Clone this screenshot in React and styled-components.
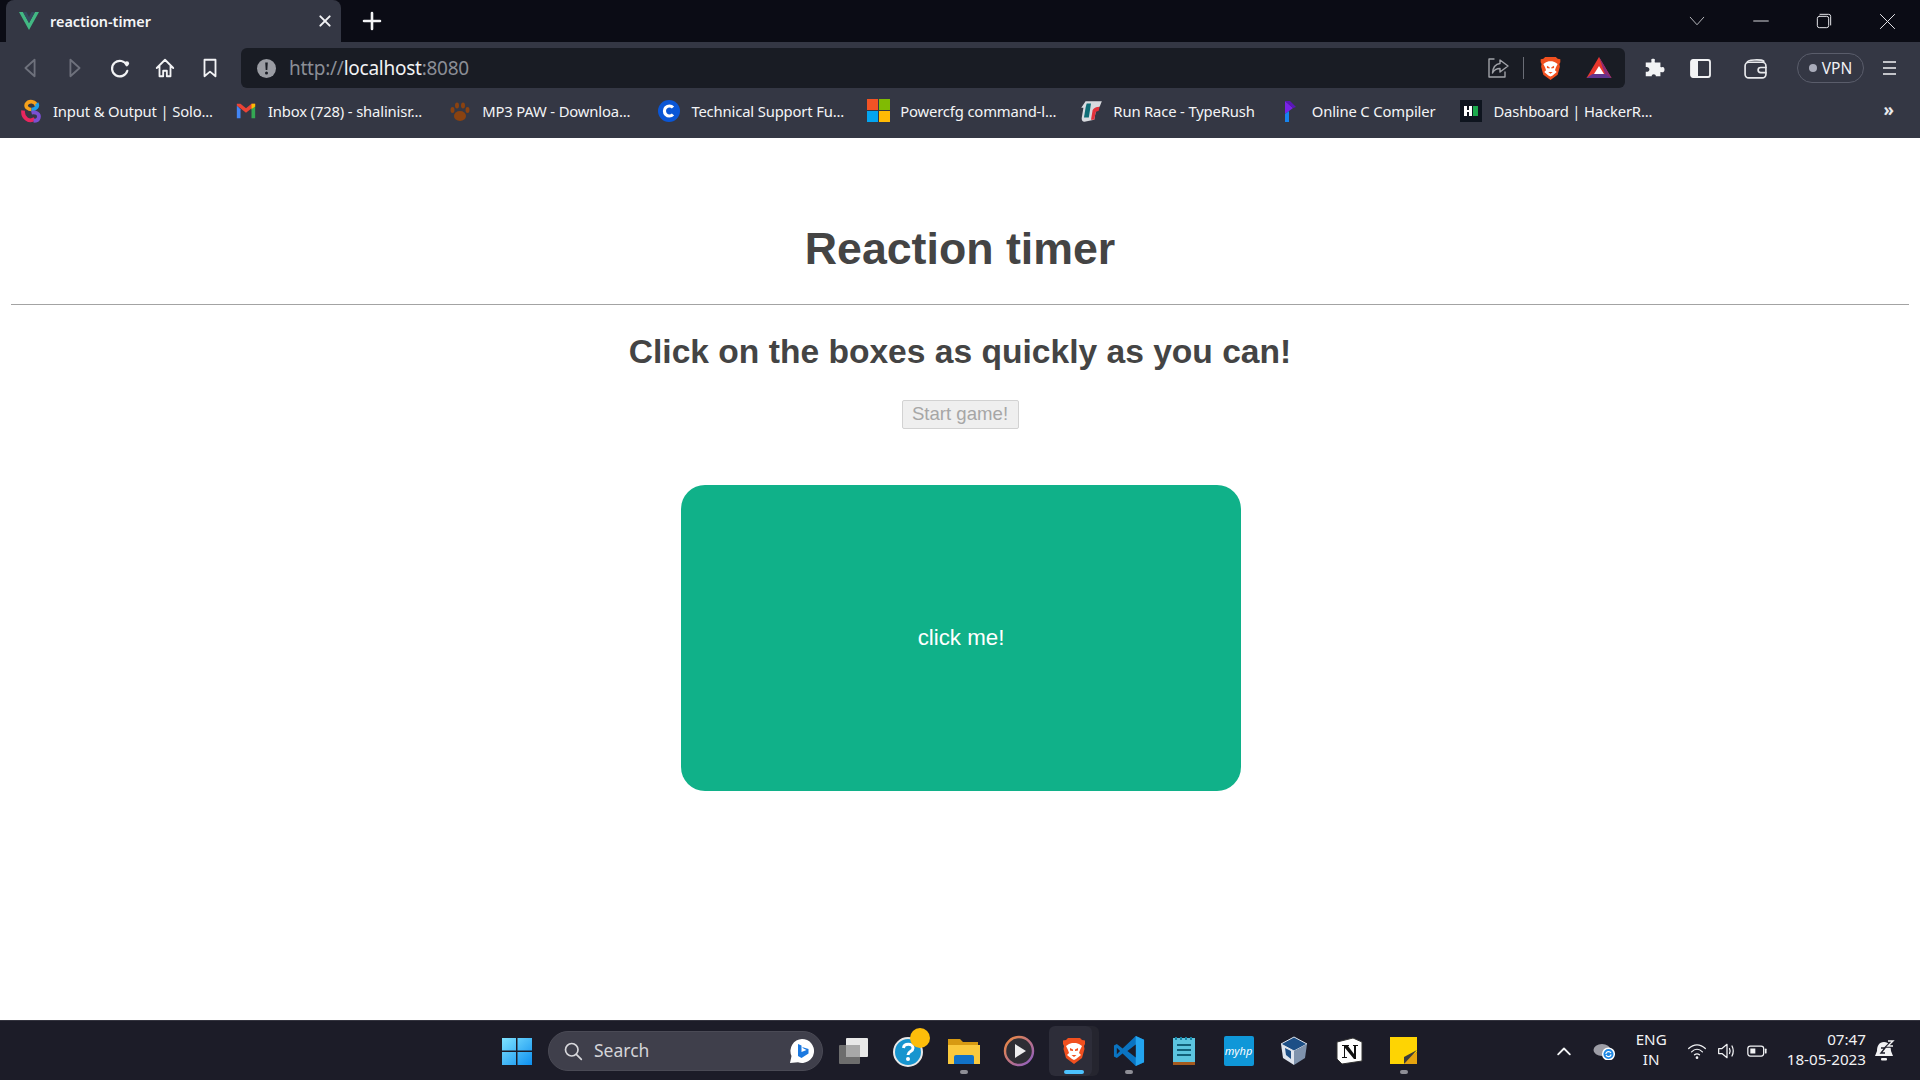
import React from 'react';
import styled, { createGlobalStyle } from 'styled-components';

const Global = createGlobalStyle`
  html, body { margin: 0; padding: 0; height: 100%; overflow: hidden; }
  body { font-family: "Liberation Sans", Arial, sans-serif; background: #fff; }
`;

const Screen = styled.div`
  width: 1920px;
  height: 1080px;
  display: flex;
  flex-direction: column;
`;

/* browser chrome */
const TabStrip = styled.div`
  height: 42px;
  flex: none;
  background: #0b0c15;
  display: flex;
  align-items: flex-end;
  padding-left: 6px;
`;
const Tab = styled.div`
  width: 335px;
  height: 42px;
  background: #343744;
  border-radius: 8px 8px 0 0;
  display: flex;
  align-items: center;
  padding: 0 8px 0 13px;
  box-sizing: border-box;
  color: #f4f5f7;
  font: 600 14.4px "Noto Sans", sans-serif;
`;
const TabTitle = styled.span`
  margin-left: 11px;
  flex: 1;
`;
const NewTab = styled.div`
  margin-left: 19px;
  margin-bottom: 9px;
  width: 24px;
  height: 24px;
  display: flex;
`;
const WindowControls = styled.div`
  margin-left: auto;
  height: 42px;
  display: flex;
  align-items: center;
  gap: 47px;
  padding-right: 24px;
`;
const Toolbar = styled.div`
  height: 46px;
  flex: none;
  background: #343744;
  display: flex;
  align-items: center;
  box-sizing: border-box;
  padding: 6px 0 0 19px;
`;
const NavIcons = styled.div`
  display: flex;
  align-items: center;
  gap: 23px;
  width: 222px;
`;
const AddressBar = styled.div`
  width: 1384px;
  height: 40px;
  background: #191c24;
  border-radius: 6px;
  display: flex;
  align-items: center;
  padding: 0 13px 0 16px;
  box-sizing: border-box;
`;
const Url = styled.div`
  margin-left: 13px;
  font: 19px "Noto Sans", sans-serif;
  letter-spacing: -0.25px;
  color: #8b8e96;
  flex: 1;
  b { font-weight: 400; color: #f1f2f4; }
`;
const AddressDivider = styled.div`
  width: 1px;
  height: 22px;
  background: #6a6d76;
  margin: 0 14px 0 13px;
`;
const ToolbarRight = styled.div`
  display: flex;
  align-items: center;
  margin-left: 18px;
  gap: 25px;
`;
const WalletIcon = styled.div`
  display: flex;
  margin-left: 7px;
`;
const VpnPill = styled.div`
  width: 67px;
  height: 30px;
  border: 1px solid #5a5d6b;
  border-radius: 16px;
  box-sizing: border-box;
  display: flex;
  align-items: center;
  justify-content: center;
  gap: 5px;
  color: #f0f1f4;
  font: 15.5px "Noto Sans", sans-serif;
  margin-left: 4px;
  &::before {
    content: "";
    width: 8px;
    height: 8px;
    border-radius: 50%;
    background: #a9acba;
  }
`;
const MenuIcon = styled.div`
  display: flex;
  margin-left: -7px;
`;
const Bookmarks = styled.div`
  height: 50px;
  flex: none;
  background: #343744;
  display: flex;
  align-items: center;
  box-sizing: border-box;
  padding: 0 24px 5px 18px;
`;
const Bookmark = styled.div`
  display: flex;
  align-items: center;
  gap: 9px;
  margin-right: ${p => p.$gap}px;
  color: #f3f4f6;
  font: 14.8px "Noto Sans", sans-serif;
  letter-spacing: -0.15px;
  white-space: nowrap;
`;
const Favicon = styled.div`
  width: 26px;
  height: 26px;
  display: flex;
  align-items: center;
  justify-content: center;
  flex: none;
`;
const MoreMarks = styled.div`
  margin-left: auto;
  color: #e8e9ec;
  font: 700 17px "Noto Sans", sans-serif;
  position: relative;
  top: -1px;
  left: -2px;
`;

/* page */
const Page = styled.main`
  flex: 1;
  background: #fff;
  padding: 86px 11px 0;
  color: #444;
  text-align: center;
`;
const Title = styled.h1`
  margin: 0;
  font-size: 44.7px;
  line-height: 50px;
  font-weight: 700;
`;
const Rule = styled.hr`
  margin: 30px 0 0;
  border: none;
  height: 1px;
  background: #a3a3a3;
`;
const Subtitle = styled.h2`
  margin: 27px 0 0;
  font-size: 33.6px;
  line-height: 40px;
  font-weight: 700;
`;
const StartButton = styled.button`
  display: block;
  margin: 28px auto 0;
  width: 117px;
  height: 29px;
  padding: 0 0 1px;
  background: #efefef;
  border: 1px solid #d2d2d2;
  border-radius: 2px;
  color: #a6a6a6;
  font: 18.6px "Liberation Sans", Arial, sans-serif;
`;
const Block = styled.div`
  width: 560px;
  height: 306px;
  margin: 56px 0 0 670px;
  background: #10b189;
  border-radius: 24px;
  display: flex;
  align-items: center;
  justify-content: center;
  color: #fff;
  font-size: 22.3px;
`;

/* windows taskbar */
const Taskbar = styled.footer`
  height: 60px;
  flex: none;
  background: #1c1c28;
  border-top: 1px solid #33333e;
  box-sizing: border-box;
  display: flex;
  align-items: center;
  padding-left: 502px;
`;
const SearchBox = styled.div`
  width: 275px;
  height: 40px;
  margin-left: 16px;
  background: #3f3f4b;
  border: 1px solid #4a4a55;
  border-radius: 20px;
  box-sizing: border-box;
  display: flex;
  align-items: center;
  padding: 0 7px 0 14px;
  color: #d4d4d8;
  font: 17.5px "Noto Sans", sans-serif;
  span { margin: 0 0 2px 11px; flex: 1; }
`;
const AppRow = styled.div`
  display: flex;
  align-items: center;
  margin-left: 3px;
`;
const AppSlot = styled.div`
  position: relative;
  isolation: isolate;
  width: 55px;
  height: 50px;
  display: flex;
  align-items: center;
  justify-content: center;
  flex: none;
  ${p => p.$active && `
    &::before {
      content: "";
      position: absolute;
      z-index: -1;
      left: 3px;
      top: 0;
      width: 43px;
      height: 50px;
      border-radius: 6px;
      background: #2d2d39;
      box-shadow: 7px 0 0 #25252f;
    }
  `}
  ${p => p.$dot && `
    &::after {
      content: "";
      position: absolute;
      bottom: 2px;
      left: 50%;
      transform: translateX(-50%);
      width: ${p.$active ? 20 : 8}px;
      height: 3.5px;
      border-radius: 2px;
      background: ${p.$active ? '#4cc2ff' : '#8e8e96'};
    }
  `}
`;
const Tray = styled.div`
  margin-left: auto;
  display: flex;
  align-items: center;
  color: #f2f2f4;
  font: 15.2px/20px "Noto Sans", sans-serif;
`;
const Lang = styled.div`
  text-align: center;
  margin: 0 20px 3px 21px;
`;
const Clock = styled.div`
  text-align: right;
  margin: 0 7px 3px 20px;
`;
const TrayIcons = styled.div`
  display: flex;
  align-items: center;
  gap: 10px;
`;
const CloudIcon = styled.div`
  display: flex;
  margin-left: 9px;
`;
const BellIcon = styled.div`
  display: flex;
  margin-right: 23px;
`;
const MyHp = styled.span`
  width: 30px;
  height: 30px;
  background: #0f97d8;
  color: #fff;
  border-radius: 2px;
  display: flex;
  align-items: center;
  justify-content: center;
  font: italic 11px "Noto Sans", sans-serif;
`;
const Badged = styled.span`
  position: relative;
  display: flex;
  &::after {
    content: "";
    position: absolute;
    right: -5px;
    top: -7px;
    width: 20px;
    height: 20px;
    border-radius: 50%;
    background: #fdbd0a;
  }
`;

const stroke = { fill: 'none', stroke: 'currentColor', strokeWidth: 2, strokeLinecap: 'round', strokeLinejoin: 'round' };
const Ico = ({ size = 22, color = '#f2f3f5', children, view = '0 0 24 24' }) => (
  <svg width={size} height={size} viewBox={view} style={{ color, flex: 'none' }}>{children}</svg>
);

const Lion = ({ size }) => (
  <svg width={size} height={size} viewBox="0 0 24 28">
    <path d="M6 1 H18 L20 3 L23 3.5 L23 7 L22 9 L22.5 12 L20 21 L12 27 L4 21 L1.5 12 L2 9 L1 7 L1 3.5 L4 3 Z" fill="#f1501f" />
    <path d="M7 7 L10 6 H14 L17 7 L20 9 L18 13 L17 16 L19 18 L14 22 L12 23 L10 22 L5 18 L7 16 L6 13 L4 9 Z" fill="#fff" />
    <path d="M8 11 L11 12.5 L11 14 L8 13.5 Z M16 11 L13 12.5 L13 14 L16 13.5 Z M9.5 18 H14.5 L12 20 Z" fill="#f1501f" />
  </svg>
);

const bookmarks = [
  { text: 'Input & Output | Solo...', gap: 20, icon: (
    <Ico size={25}>
      <path d="M17 8 A5.5 5.5 0 0 0 7 6 C6 9 9 11 12 11" fill="none" stroke="#f5a11c" strokeWidth="3.4" />
      <path d="M12 11 C16 11 19 8 17 5" fill="none" stroke="#1f9fe8" strokeWidth="3.4" />
      <path d="M4 12 C3 19 10 24 15 20" fill="none" stroke="#e8265e" strokeWidth="3.6" />
      <path d="M12 14 C16 13 20 15 19 19 C18.5 21 16 22 14 22" fill="none" stroke="#7b4fd1" strokeWidth="3.6" />
    </Ico>
  ) },
  { text: 'Inbox (728) - shalinisr...', gap: 25, icon: (
    <Ico size={22}><path d="M2 6 L2 20 H6 V10 Z" fill="#4285f4" /><path d="M22 6 V20 H18 V10 Z" fill="#34a853" /><path d="M2 6 L12 14 L22 6 V4 L18 4 L12 9 L6 4 H2 Z" fill="#ea4335" /><path d="M18 4 L22 4 V7 L18 10 Z" fill="#fbbc04" /></Ico>
  ) },
  { text: 'MP3 PAW - Downloa...', gap: 26, icon: (
    <Ico size={24}><ellipse cx="12" cy="17" rx="6" ry="5" fill="#8a4210" /><ellipse cx="4.5" cy="11" rx="2" ry="3" fill="#8a4210" /><ellipse cx="9" cy="6.5" rx="2" ry="3" fill="#8a4210" /><ellipse cx="15" cy="6.5" rx="2" ry="3" fill="#8a4210" /><ellipse cx="19.5" cy="11" rx="2" ry="3" fill="#8a4210" /></Ico>
  ) },
  { text: 'Technical Support Fu...', gap: 21, icon: (
    <Ico size={24}><circle cx="12" cy="12" r="11" fill="#0a56d6" /><path d="M16 8.5 A5 5 0 1 0 16 15.5" fill="none" stroke="#fff" strokeWidth="3.2" /></Ico>
  ) },
  { text: 'Powercfg command-l...', gap: 22, icon: (
    <Ico size={23} view="0 0 23 23"><rect width="11" height="11" fill="#f25325" /><rect x="12" width="11" height="11" fill="#80bb03" /><rect y="12" width="11" height="11" fill="#03a5f0" /><rect x="12" y="12" width="11" height="11" fill="#ffba05" /></Ico>
  ) },
  { text: 'Run Race - TypeRush', gap: 22, icon: (
    <Ico size={26}><path d="M7 3 H22 L20 8 L17 9 L15 20 L6 22 C4 22 3 20 3.5 18 L5 9 H3 Z" fill="#d8dadf" /><path d="M8 5 H12 L10 18 H5.5 L7 9 Z" fill="#0f6c76" /><path d="M13.5 11 C15 9 17 8 20 8 L19 12 C17 12 16 13 16 15 L15 20 H12 Z" fill="#e2313a" /></Ico>
  ) },
  { text: 'Online C Compiler', gap: 23, icon: (
    <Ico size={24}><path d="M7 2 L15 9 L7 15 Z" fill="#7a22e8" /><path d="M7 2 L12 2 L18 8 L15 9 Z" fill="#5a16b8" /><path d="M7 15 L11 12 V23 H7 Z" fill="#1684f0" /></Ico>
  ) },
  { text: 'Dashboard | HackerR...', gap: 0, icon: (
    <svg width="22" height="22" viewBox="0 0 22 22"><rect width="22" height="22" fill="#0e141e" /><path d="M4 6 H7 V10 H9 V6 H12 V16 H9 V12 H7 V16 H4 Z" fill="#fff" /><rect x="13" y="6" width="5" height="10" fill="#1ba94c" /></svg>
  ) },
];

const apps = [
  { node: (
    <svg width="32" height="28" viewBox="0 0 32 28"><rect x="8" y="1" width="22" height="19" rx="1" fill="#e8e8e8" /><rect x="1" y="8" width="21" height="19" rx="1" fill="#6d6d6d" /><rect x="8" y="8" width="14" height="12" fill="#a8a8a8" /></svg>
  ) },
  { node: (
    <Badged>
      <svg width="32" height="32" viewBox="0 0 32 32"><circle cx="15" cy="17" r="14" fill="#1795cf" stroke="#e8e8e8" strokeWidth="2" /><path d="M10.5 13 C11 8 20 8 20 13 C20 17 15 16 15 20" fill="none" stroke="#fff" strokeWidth="3" /><circle cx="15" cy="24" r="2" fill="#fff" /></svg>
    </Badged>
  ) },
  { dot: true, node: (
    <svg width="32" height="28" viewBox="0 0 32 28"><path d="M0 2 H12 L15 5 H30 V10 H0 Z" fill="#d79a12" /><path d="M0 8 H32 V27 H0 Z" fill="#fac93d" /><path d="M6 20 A2 2 0 0 1 8 18 H24 A2 2 0 0 1 26 20 V27 H6 Z" fill="#1172c8" /></svg>
  ) },
  { node: (
    <svg width="32" height="32" viewBox="0 0 32 32"><defs><linearGradient id="ring" x1="0" y1="0" x2="1" y2="1"><stop offset="0" stopColor="#f08a3c" /><stop offset="1" stopColor="#8a5cc8" /></linearGradient></defs><circle cx="16" cy="16" r="14" fill="#2e2e34" stroke="url(#ring)" strokeWidth="2.4" /><path d="M12 9 L23 16 L12 23 Z" fill="#eee" /></svg>
  ) },
  { dot: true, active: true, node: <Lion size={28} /> },
  { dot: true, node: (
    <svg width="32" height="32" viewBox="0 0 100 100">
      <path d="M71 3 L97 15 V85 L71 97 L30 58 L12 72 L3 67 V33 L12 28 L30 42 Z" fill="#0a74c2" />
      <path d="M12 40 V60 L22 50 Z" fill="#1c1c28" />
      <path d="M71 3 L97 15 V85 L71 97 Z" fill="#23a4ef" />
      <path d="M71 30 L45 50 L71 70 Z" fill="#1c1c28" />
    </svg>
  ) },
  { node: (
    <svg width="24" height="30" viewBox="0 0 24 30"><rect x="1" y="2" width="22" height="27" fill="#5cc4df" /><rect x="1" y="26" width="22" height="3" fill="#a55a1e" /><path d="M5 9 H19 M5 14 H19 M5 19 H19" stroke="#12607a" strokeWidth="2" /><path d="M4 1 V4 M9 1 V4 M14 1 V4 M19 1 V4" stroke="#1785a5" strokeWidth="2" /></svg>
  ) },
  { node: <MyHp>myhp</MyHp> },
  { node: (
    <svg width="28" height="30" viewBox="0 0 28 30"><path d="M14 1 L27 8 L14 15 L1 8 Z" fill="#1d4f86" stroke="#dfe5ee" /><path d="M1 8 L14 15 V29 L3 22 Z" fill="#dfe5ee" /><path d="M27 8 L14 15 V29 L25 22 Z" fill="#7f93ad" /><path d="M5 12 L11 15 V23 L6 19 Z" fill="#1d4f86" /></svg>
  ) },
  { node: (
    <svg width="28" height="28" viewBox="0 0 28 28"><path d="M2 5 L18 1 L27 5 V24 L7 27 L2 22 Z" fill="#fff" stroke="#333" /><path d="M7 8 H14 V9 H13 L19 17 V9 H18 V8 H23 V9 H21 V22 H19 L10 11 V20 H12 V21 H7 V20 H9 V9 H7 Z" fill="#111" /></svg>
  ) },
  { dot: true, node: (
    <svg width="27" height="27" viewBox="0 0 27 27"><path d="M0 0 H27 V15 L15 27 H0 Z" fill="#fed403" /><path d="M27 15 V27 H15 L15 22 Z" fill="#e5a30f" /><path d="M27 13 L14 20 V27 Z" fill="#3b3b3b" /></svg>
  ) },
];

export default function App() {
  return (
    <Screen>
      <Global />
      <TabStrip>
        <Tab>
          <svg width="20" height="18" viewBox="0 0 20 18">
            <path d="M0 0 H4 L10 11 L16 0 H20 L10 18 Z" fill="#42b883" />
            <path d="M4 0 H7.5 L10 5 L12.5 0 H16 L10 11 Z" fill="#35495e" />
          </svg>
          <TabTitle>reaction-timer</TabTitle>
          <Ico size={16}><path d="M5 5 L19 19 M19 5 L5 19" {...stroke} strokeWidth="3" /></Ico>
        </Tab>
        <NewTab>
          <Ico size={24}><path d="M12 4 V20 M4 12 H20" {...stroke} strokeWidth="2.6" /></Ico>
        </NewTab>
        <WindowControls>
          <Ico size={18} color="#c6c7cc"><path d="M3 7 L12 17 L21 7" {...stroke} strokeWidth="1.2" /></Ico>
          <Ico size={16} color="#e6e6ea"><path d="M1 12 H23" {...stroke} strokeWidth="1.4" /></Ico>
          <Ico size={16} color="#e6e6ea"><rect x="2" y="5" width="17" height="17" rx="3" {...stroke} strokeWidth="1.5" /><path d="M6 2 H19 A3 3 0 0 1 22 5 V18" {...stroke} strokeWidth="1.5" /></Ico>
          <Ico size={17} color="#e6e6ea"><path d="M2 2 L22 22 M22 2 L2 22" {...stroke} strokeWidth="1.4" /></Ico>
        </WindowControls>
      </TabStrip>

      <Toolbar>
        <NavIcons>
          <Ico color="#6e717c"><path d="M17 3 L7 12 L17 21 Z" {...stroke} /></Ico>
          <Ico color="#6e717c"><path d="M7 3 L17 12 L7 21 Z" {...stroke} /></Ico>
          <Ico><path d="M19.5 9 A8.5 8.5 0 1 0 20 15" {...stroke} strokeWidth="2.4" /><circle cx="19.5" cy="7" r="2.4" fill="currentColor" /></Ico>
          <Ico><path d="M3 12 L12 3 L21 12 M6 10 V21 H10 V15 H14 V21 H18 V10" {...stroke} /></Ico>
          <Ico><path d="M6 3 H18 V21 L12 16 L6 21 Z" {...stroke} /></Ico>
        </NavIcons>
        <AddressBar>
          <svg width="19" height="19" viewBox="0 0 19 19">
            <circle cx="9.5" cy="9.5" r="9.5" fill="#9a9ca3" />
            <path d="M8.2 3.5 H10.8 L10.3 11 H8.7 Z" fill="#191c24" />
            <circle cx="9.5" cy="14" r="1.5" fill="#191c24" />
          </svg>
          <Url>http://<b>localhost</b>:8080</Url>
          <Ico size={24} color="#a0a2a8"><path d="M8 3 H3 V21 H19 V16" {...stroke} strokeWidth="1.4" /><path d="M14 4 L22 10 L14 16 V12.5 C10 12.5 8 14 6.5 17 C7 11 10 8 14 7.5 Z" {...stroke} strokeWidth="1.4" /></Ico>
          <AddressDivider />
          <Lion size={25} />
          <svg width="26" height="24" viewBox="0 0 26 24" style={{ marginLeft: 23 }}>
            <path d="M13 1 L25.5 22 H0.5 Z" fill="#e8372c" />
            <path d="M13 1 L25.5 22 L19 18 Z" fill="#8a2a78" />
            <path d="M0.5 22 H25.5 L19.5 18 H6.5 Z" fill="#60358f" />
            <path d="M13 10 L18 18 H8 Z" fill="#fff" />
          </svg>
        </AddressBar>
        <ToolbarRight>
          <Ico><path d="M9 3 C9 1.5 13 1.5 13 3 C13 4 12.5 5 13 6 H19 V11 C20 11.5 21 10.5 22 11 C24 12 24 16 22 16.5 C21 17 20 16 19 16.5 V21 H14 C14.5 18 9 18 9.5 21 H3 V16 C5 16.5 7 15.5 7 13.5 C7 11.5 5 10.5 3 11 V6 H9 C9.5 5 9 4 9 3 Z" fill="currentColor" /></Ico>
          <Ico size={21} view="0 0 21 21"><rect x="1" y="2" width="19" height="17" rx="2" fill="none" stroke="currentColor" strokeWidth="1.8" /><rect x="1" y="2" width="7" height="17" fill="currentColor" /></Ico>
          <WalletIcon>
            <Ico size={25} color="#e8e9ec"><rect x="2" y="6" width="20" height="15" rx="3.5" {...stroke} strokeWidth="1.6" /><path d="M4 6 C4 3.5 17 3 20 5 M22 11 H17 A2.5 2.5 0 0 0 17 16 H22" {...stroke} strokeWidth="1.6" /></Ico>
          </WalletIcon>
          <VpnPill>VPN</VpnPill>
          <MenuIcon>
            <Ico size={16} view="0 0 16 16"><path d="M1 2 H14 M1 8 H14 M1 14 H14" stroke="currentColor" strokeWidth="1.7" /></Ico>
          </MenuIcon>
        </ToolbarRight>
      </Toolbar>

      <Bookmarks>
        {bookmarks.map(b => (
          <Bookmark key={b.text} $gap={b.gap}>
            <Favicon>{b.icon}</Favicon>
            {b.text}
          </Bookmark>
        ))}
        <MoreMarks>»</MoreMarks>
      </Bookmarks>

      <Page>
        <Title>Reaction timer</Title>
        <Rule />
        <Subtitle>Click on the boxes as quickly as you can!</Subtitle>
        <StartButton disabled>Start game!</StartButton>
        <Block>click me!</Block>
      </Page>

      <Taskbar>
        <svg width="30" height="28" viewBox="0 0 30 28">
          <defs>
            <linearGradient id="win" x1="0" y1="0" x2="1" y2="1"><stop offset="0" stopColor="#7fe3ff" /><stop offset="1" stopColor="#0d8fef" /></linearGradient>
          </defs>
          <path d="M0 1 H14 V13.5 H0 Z M15.5 1 H30 V13.5 H15.5 Z M0 15 H14 V28 H0 Z M15.5 15 H30 V28 H15.5 Z" fill="url(#win)" />
        </svg>
        <SearchBox>
          <Ico size={20} color="#d8d8dc"><circle cx="10.5" cy="10.5" r="7.5" {...stroke} /><path d="M16 16 L22 22" {...stroke} /></Ico>
          <span>Search</span>
          <svg width="26" height="26" viewBox="0 0 26 26">
            <path d="M13 1 A12 12 0 1 1 9 24.3 L1 25 L2.5 18 A12 12 0 0 1 13 1 Z" fill="#fff" />
            <path d="M9 6 L12.5 7.5 V14 L17.5 12 L14.5 10.5 L13 9 L19.5 11 V15.5 L12.5 20 L9 18 Z" fill="#1b79e0" />
          </svg>
        </SearchBox>
        <AppRow>
          {apps.map((a, i) => (
            <AppSlot key={i} $dot={a.dot} $active={a.active}>{a.node}</AppSlot>
          ))}
        </AppRow>
        <Tray>
          <TrayIcons>
            <Ico size={20}><path d="M5 16 L12 9 L19 16" {...stroke} strokeWidth="2.2" /></Ico>
            <CloudIcon>
              <svg width="22" height="18" viewBox="0 0 22 18">
                <ellipse cx="9" cy="8" rx="8.5" ry="6" fill="#9d9da6" />
                <circle cx="15.5" cy="12" r="5.8" fill="#1e88e5" stroke="#fff" strokeWidth="1.5" />
                <path d="M12.8 12 A2.8 2.8 0 0 1 18 11 M18.2 12.5 A2.8 2.8 0 0 1 13 13" fill="none" stroke="#fff" strokeWidth="1.2" />
              </svg>
            </CloudIcon>
          </TrayIcons>
          <Lang>ENG<br />IN</Lang>
          <TrayIcons>
            <Ico size={20}><path d="M2 9 C8 3 16 3 22 9 M5.5 13 C9.5 9 14.5 9 18.5 13 M9 16.5 C11 15 13 15 15 16.5" {...stroke} strokeWidth="1.5" /><circle cx="12" cy="20" r="1.6" fill="currentColor" /></Ico>
            <Ico size={20}><path d="M2 9 H6 L12 4 V20 L6 15 H2 Z" {...stroke} strokeWidth="1.5" /><path d="M15 9 C16 11 16 13 15 15 M18 6 C20 10 20 14 18 18" {...stroke} strokeWidth="1.5" /></Ico>
            <Ico size={20}><rect x="1" y="6" width="19" height="12" rx="3" {...stroke} strokeWidth="1.5" /><rect x="4" y="9" width="6" height="6" fill="currentColor" /><path d="M22.5 10 V14" {...stroke} /></Ico>
          </TrayIcons>
          <Clock>07:47<br />18-05-2023</Clock>
          <BellIcon>
            <svg width="24" height="24" viewBox="0 0 24 24">
              <path d="M11 3 C6 3 4 7 4 12 L2 17 H20 L18 12 C18 7 16 3 11 3 Z" fill="#f2f2f4" />
              <rect x="8" y="19" width="6" height="2.5" rx="1" fill="#f2f2f4" />
              <path d="M15 2 H20 L15 7 H20" fill="none" stroke="#1c1c28" strokeWidth="3.5" />
              <path d="M15 2 H20 L15 7 H20" fill="none" stroke="#f2f2f4" strokeWidth="1.4" />
              <path d="M8 9 H12 L8 14 H12" fill="none" stroke="#1c1c28" strokeWidth="1.4" />
            </svg>
          </BellIcon>
        </Tray>
      </Taskbar>
    </Screen>
  );
}
